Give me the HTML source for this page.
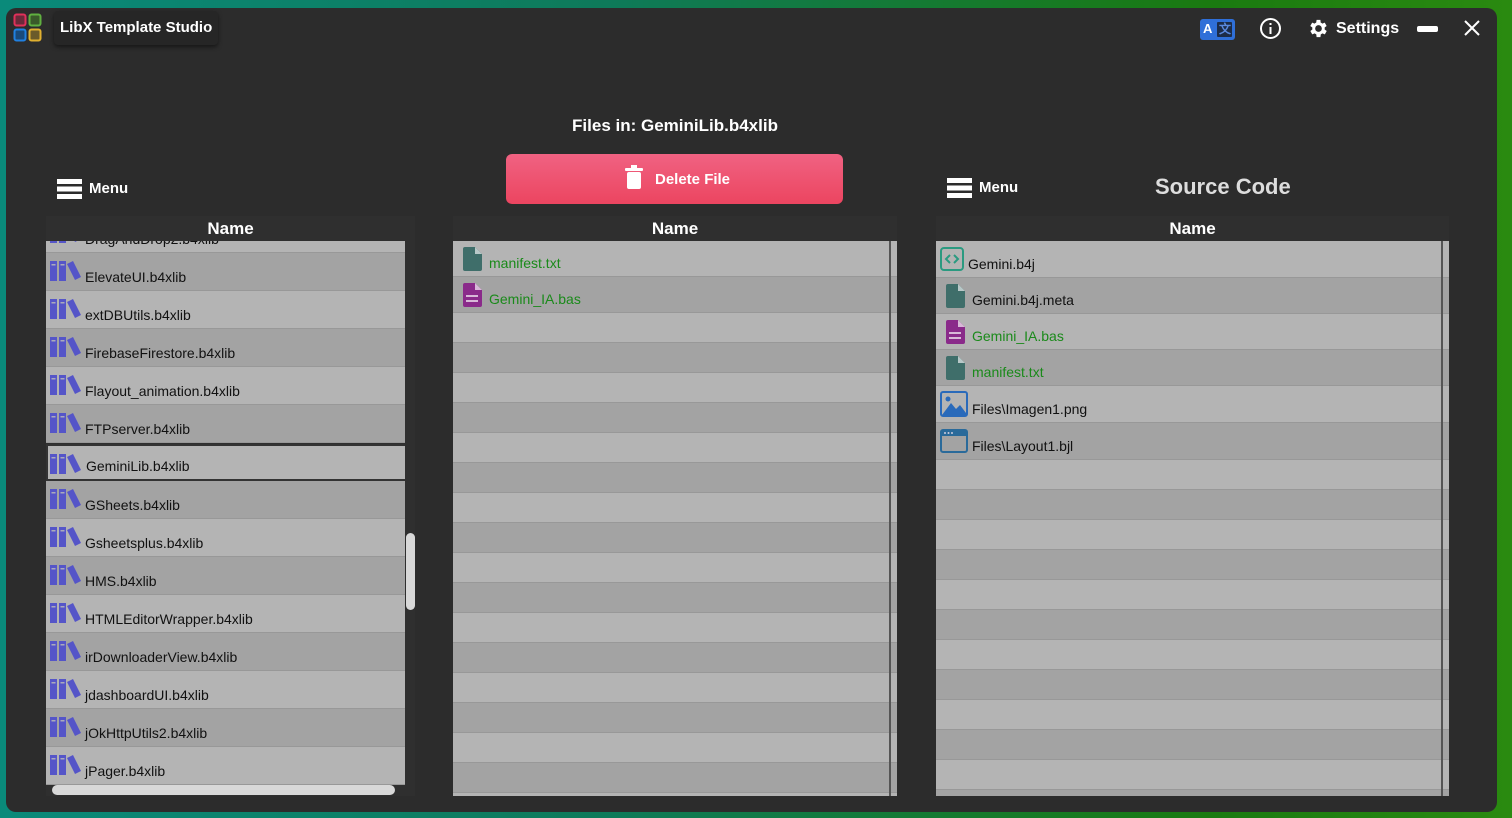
<!DOCTYPE html>
<html><head><meta charset="utf-8"><style>
*{margin:0;padding:0;box-sizing:border-box}
body{width:1512px;height:818px;overflow:hidden;position:relative;background:linear-gradient(90deg,#0a8a7a 0%,#0e7a5a 40%,#1a7a10 80%,#2a8a10 100%);font-family:"Liberation Sans",sans-serif}
.win{position:absolute;left:6px;top:8px;width:1491px;height:804px;background:#2c2c2c;border-radius:10px}
.a{position:absolute}
.w{color:#fff;font-weight:bold}
.tbl{position:absolute;background:#2f2f2f}
.hd{height:25px;color:#fff;font-weight:bold;font-size:17px;text-align:center;line-height:26px}
.r{position:absolute;left:0;font-size:14px;color:#111}
.L{background:#b4b4b4;border-bottom:1px solid #989898}
.D{background:#a3a3a3;border-bottom:1px solid #989898}
.r svg{position:absolute}
.r span{position:absolute;bottom:5px}
.g{color:#1a8a1a}
</style></head><body>
<div class="win"></div>
<svg class="a" style="left:13px;top:13px" width="30" height="30" viewBox="0 0 30 30">
<rect x="1.5" y="1.5" width="11" height="11" rx="2" fill="#6a2a3a" stroke="#e0305a" stroke-width="2"/>
<rect x="16.5" y="1.5" width="11" height="11" rx="2" fill="#3a5a2a" stroke="#60b040" stroke-width="2"/>
<rect x="1.5" y="16.5" width="11" height="11" rx="2" fill="#1a4a7a" stroke="#2080e0" stroke-width="2"/>
<rect x="16.5" y="16.5" width="11" height="11" rx="2" fill="#6a5a2a" stroke="#e0b030" stroke-width="2"/>
</svg>
<div class="a w" style="left:54px;top:11px;width:164px;height:34px;background:#262626;border-radius:4px;box-shadow:0 2px 4px rgba(0,0,0,.5);font-size:15px;line-height:33px;padding-left:6px">LibX Template Studio</div>
<div class="a" style="left:1200px;top:19px;width:35px;height:21px;background:#2f6fd8;border-radius:3px"></div>
<div class="a" style="left:1217px;top:22px;width:15px;height:15px;background:#1c2c48;border-radius:1px"></div>
<div class="a w" style="left:1203px;top:21px;font-size:13px">A</div>
<div class="a" style="left:1219px;top:20px;font-size:12px;color:#5a8ae0;font-weight:bold">文</div>
<svg class="a" style="left:1259px;top:17px" width="23" height="23"><circle cx="11.5" cy="11.5" r="9.5" fill="none" stroke="#fff" stroke-width="2"/><rect x="10.5" y="10" width="2" height="7" fill="#fff"/><rect x="10.5" y="6" width="2" height="2" fill="#fff"/></svg>
<svg class="a" style="left:1307px;top:17px" width="23" height="23" viewBox="0 0 24 24"><path fill="#fff" d="M19.4 13a7.5 7.5 0 0 0 0-2l2.1-1.6-2-3.5-2.5 1a7 7 0 0 0-1.7-1L15 3h-4l-.4 2.9a7 7 0 0 0-1.7 1l-2.5-1-2 3.5L6.6 11a7.5 7.5 0 0 0 0 2l-2.1 1.6 2 3.5 2.5-1a7 7 0 0 0 1.7 1L11 21h4l.4-2.9a7 7 0 0 0 1.7-1l2.5 1 2-3.5zM13 15.5A3.5 3.5 0 1 1 13 8.5a3.5 3.5 0 0 1 0 7z" transform="translate(-1 0)"/></svg>
<div class="a w" style="left:1336px;top:20px;font-size:16px">Settings</div>
<div class="a" style="left:1417px;top:26px;width:21px;height:6px;background:#fff;border-radius:2px"></div>
<svg class="a" style="left:1464px;top:20px" width="16" height="16"><path d="M1 1L15 15M15 1L1 15" stroke="#fff" stroke-width="2"/></svg>
<div class="a w" style="left:0;width:1350px;top:116px;text-align:center;font-size:17px">Files in: GeminiLib.b4xlib</div>
<div class="a" style="left:506px;top:154px;width:337px;height:50px;border-radius:6px;background:linear-gradient(#f06282,#ec4560)"></div>
<svg class="a" style="left:624px;top:165px" width="20" height="25"><rect x="1" y="3" width="18" height="3" rx="1" fill="#fff"/><rect x="7" y="0" width="6" height="3" fill="#fff"/><rect x="3" y="7" width="14" height="17" rx="2" fill="#fff"/></svg>
<div class="a w" style="left:655px;top:171px;font-size:15px">Delete File</div>
<svg class="a" style="left:57px;top:179px" width="25" height="20"><rect y="0" width="25" height="5" fill="#fff"/><rect y="7.5" width="25" height="5" fill="#fff"/><rect y="15" width="25" height="5" fill="#fff"/></svg>
<div class="a w" style="left:89px;top:180px;font-size:15px">Menu</div>
<svg class="a" style="left:947px;top:178px" width="25" height="20"><rect y="0" width="25" height="5" fill="#fff"/><rect y="7.5" width="25" height="5" fill="#fff"/><rect y="15" width="25" height="5" fill="#fff"/></svg>
<div class="a w" style="left:979px;top:179px;font-size:15px">Menu</div>
<div class="a" style="left:1155px;top:174px;font-size:22px;font-weight:bold;color:#ddd">Source Code</div>

<div class="tbl" style="left:46px;top:216px;width:369px;height:580px">
<div class="hd">Name</div>
<div style="position:absolute;left:0;top:25px;width:359px;height:544px;overflow:hidden" id="lt"></div>
<div class="a" style="left:360px;top:317px;width:9px;height:77px;background:#d8d8d8;border-radius:5px"></div>
<div class="a" style="left:6px;top:569px;width:343px;height:10px;background:#d8d8d8;border-radius:5px"></div>
</div>

<div class="tbl" style="left:453px;top:216px;width:444px;height:580px">
<div class="hd">Name</div>
<div id="mt" style="position:absolute;left:0;top:25px;width:444px;height:555px;overflow:hidden"></div>
</div>

<div class="tbl" style="left:936px;top:216px;width:513px;height:580px">
<div class="hd">Name</div>
<div id="rt" style="position:absolute;left:0;top:25px;width:513px;height:555px;overflow:hidden"></div>
</div>

<script>
var book='<svg style="left:4px;top:6px" width="32" height="24" viewBox="0 0 32 24"><rect x="0" y="2" width="7" height="20" fill="#5555c8"/><rect x="9" y="2" width="7" height="20" fill="#5555c8"/><rect x="1.5" y="5" width="4" height="1.5" fill="#aab"/><rect x="10.5" y="5" width="4" height="1.5" fill="#aab"/><path d="M17 5L23 2L31 18L25 21Z" fill="#5555c8"/></svg>';
var names=["ElevateUI.b4xlib","extDBUtils.b4xlib","FirebaseFirestore.b4xlib","Flayout_animation.b4xlib","FTPserver.b4xlib","GeminiLib.b4xlib","GSheets.b4xlib","Gsheetsplus.b4xlib","HMS.b4xlib","HTMLEditorWrapper.b4xlib","irDownloaderView.b4xlib","jdashboardUI.b4xlib","jOkHttpUtils2.b4xlib","jPager.b4xlib"];
var h='<div class="r L" style="top:-26px;height:38px;width:359px">'+book+'<span style="left:39px">DragAndDrop2.b4xlib</span></div>';
for(var i=0;i<names.length;i++){var t=12+i*38;var c=i%2?'L':'D';
 if(i==5){h+='<div class="r L" style="top:'+(t+1)+'px;height:37px;width:359px;border:2px solid #333;border-right:none">'+book.replace('left:4px','left:2px')+'<span style="left:38px">'+names[i]+'</span></div>';}
 else h+='<div class="r '+c+'" style="top:'+t+'px;height:38px;width:359px">'+book+'<span style="left:39px">'+names[i]+'</span></div>';}
document.getElementById('lt').innerHTML=h;
var fileT='<svg style="left:LEFTpx;top:6px" width="20" height="24"><path d="M2 0H12L19 7V22a2 2 0 0 1-2 2H2a2 2 0 0 1-2-2V2a2 2 0 0 1 2-2z" fill="#3f6e6a"/><path d="M12 0V7H19z" fill="#b8c8c8"/></svg>';
var fileB='<svg style="left:LEFTpx;top:6px" width="20" height="24"><path d="M2 0H12L19 7V22a2 2 0 0 1-2 2H2a2 2 0 0 1-2-2V2a2 2 0 0 1 2-2z" fill="#8a2a8a"/><path d="M12 0V7H19z" fill="#d8b8d8"/><rect x="3" y="12" width="12" height="2" fill="#d8b8d8"/><rect x="3" y="17" width="12" height="2" fill="#d8b8d8"/></svg>';
function rows(id,w,items,small,sb){var h='',t=0;
 for(var i=0;i<items.length;i++){var it=items[i];var c=i%2?'D':'L';
  h+='<div class="r '+c+'" style="top:'+t+'px;height:'+it[0]+'px;width:'+w+'px">'+(it[1]||'')+(it[2]?'<span class="'+(it[3]?'g':'')+'" style="left:'+it[4]+'px">'+it[2]+'</span>':'')+'</div>';t+=it[0];}
 while(t<560){var c=(items.length%2)?'D':'L';h+='<div class="r '+c+'" style="top:'+t+'px;height:30px;width:'+w+'px"></div>';items.push([30]);t+=30;}
 h+='<div style="position:absolute;left:'+sb+'px;top:0;width:2px;height:560px;background:#555"></div>';
 document.getElementById(id).innerHTML=h;}
rows('mt',444,[[36,fileT.replace('LEFT','10'),'manifest.txt',1,36],[36,fileB.replace('LEFT','10'),'Gemini_IA.bas',1,36]],0,436);
var code='<svg style="left:4px;top:6px" width="24" height="24"><rect x="1" y="1" width="22" height="22" rx="3" fill="none" stroke="#2a9a80" stroke-width="2"/><path d="M10 8L6 12L10 16M14 8L18 12L14 16" fill="none" stroke="#2a9a80" stroke-width="2"/></svg>';
var img='<svg style="left:4px;top:5px" width="28" height="26"><rect x="1" y="1" width="26" height="24" rx="2" fill="none" stroke="#2a6aba" stroke-width="2"/><circle cx="8" cy="8" r="2.5" fill="#2a6aba"/><path d="M2 24L11 12L16 18L20 14L26 22V24z" fill="#2a6aba"/></svg>';
var lay='<svg style="left:4px;top:6px" width="28" height="24"><rect x="1" y="1" width="26" height="22" rx="2" fill="none" stroke="#2a6a9a" stroke-width="2"/><rect x="1" y="1" width="26" height="6" fill="#2a6a9a"/><circle cx="5" cy="4" r="1" fill="#ccd"/><circle cx="8.5" cy="4" r="1" fill="#ccd"/><circle cx="12" cy="4" r="1" fill="#ccd"/></svg>';
rows('rt',513,[[37,code,'Gemini.b4j',0,32],[36,fileT.replace('LEFT','10'),'Gemini.b4j.meta',0,36],[36,fileB.replace('LEFT','10'),'Gemini_IA.bas',1,36],[36,fileT.replace('LEFT','10'),'manifest.txt',1,36],[37,img,'Files\\Imagen1.png',0,36],[37,lay,'Files\\Layout1.bjl',0,36]],0,505);
</script>
</body></html>
